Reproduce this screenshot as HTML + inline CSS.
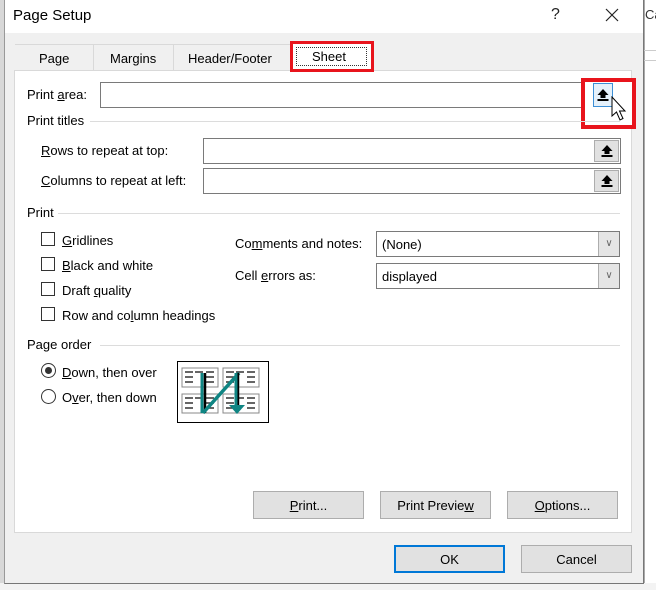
<!DOCTYPE html>
<html><head><style>
*{margin:0;padding:0;box-sizing:border-box}
body{width:656px;height:590px;overflow:hidden;background:#fff;font-family:"Liberation Sans",sans-serif;font-size:13px;color:#000;position:relative}
.a{position:absolute}
.t{position:absolute;white-space:nowrap;line-height:18px}
u{text-decoration:underline}
.inp{position:absolute;background:#fff;border:1px solid #7a7a7a}
.ub{position:absolute;width:24px;height:22px;background:#e1e1e1;border:1px solid #adadad;display:flex;align-items:center;justify-content:center}
.line{position:absolute;height:1px;background:#dcdcdc}
.cb{position:absolute;width:14px;height:14px;border:1px solid #333;background:#fff}
.btn{position:absolute;width:111px;height:28px;background:#e1e1e1;border:1px solid #adadad;text-align:center;line-height:27px}
.rad{position:absolute;width:15px;height:15px;border:1px solid #333;border-radius:50%;background:#fff}
.sel{position:absolute;background:#fff;border:1px solid #7a7a7a;height:26px;padding-left:5px;line-height:26px}
.sel .dd{position:absolute;right:0;top:0;width:21px;height:24px;background:#e5e5e5;border-left:1px solid #adadad;color:#666;font-size:10px;text-align:center;line-height:24px}
</style></head><body>
<div class="a" style="left:0;top:0;width:4px;height:590px;background:#d8d8d8"></div>
<div class="a" style="left:644px;top:0;width:12px;height:590px;background:#fff;border-left:1px solid #aaa"></div>
<div class="t" style="left:645px;top:6px;color:#333">Ca</div>
<div class="a" style="left:644px;top:50px;width:12px;height:1px;background:#ccc"></div>
<div class="a" style="left:644px;top:60px;width:12px;height:1px;background:#ccc"></div>
<div class="a" style="left:0;top:583px;width:656px;height:7px;background:#f3f3f3"></div>
<div class="a" style="left:4px;top:0;width:640px;height:584px;background:#f0f0f0;border-right:1px solid #777;border-bottom:1px solid #777;border-left:1px solid #999"></div>
<div class="a" style="left:5px;top:0;width:638px;height:33px;background:#fff"></div>
<div class="t" style="left:13px;top:7px;font-size:15px;line-height:18px">Page Setup</div>
<div class="t" style="left:551px;top:6px;font-size:16px;color:#222">?</div>
<svg class="a" style="left:605px;top:8px" width="14" height="14"><path d="M1 1L13 13M13 1L1 13" stroke="#222" stroke-width="1.2"/></svg>
<div class="a" style="left:15px;top:44px;width:275px;height:1px;background:#d9d9d9"></div>
<div class="a" style="left:93px;top:45px;width:1px;height:25px;background:#d9d9d9"></div>
<div class="a" style="left:173px;top:45px;width:1px;height:25px;background:#d9d9d9"></div>
<div class="t" style="left:39px;top:50px">Page</div>
<div class="t" style="left:110px;top:50px">Margins</div>
<div class="t" style="left:188px;top:50px">Header/Footer</div>
<div class="a" style="left:14px;top:70px;width:618px;height:463px;background:#fff;border:1px solid #d9d9d9"></div>
<div class="a" style="left:290px;top:41px;width:84px;height:31px;background:#fff;border:3px solid #e8141c"></div>
<div class="a" style="left:296px;top:47px;width:71px;height:19px;border:1px dotted #333"></div>
<div class="t" style="left:312px;top:48px">Sheet</div>
<div class="t" style="left:27px;top:86px">Print <u>a</u>rea:</div>
<div class="inp" style="left:100px;top:82px;width:522px;height:26px"></div>
<div class="a" style="left:581px;top:78px;width:55px;height:51px;border:4px solid #e8141c;background:#fff"></div>
<div class="ub" style="left:593px;top:83px;width:20px;height:24px;border-color:#3c8fd6;background:#e5f1fb">
<svg width="12" height="14"><path d="M6 1L11.5 7H8.5V10H3.5V7H0.5Z" fill="#000"/><rect x="0.5" y="11" width="11" height="2" fill="#000"/></svg></div>
<svg class="a" style="left:611px;top:96px" width="20" height="30"><path d="M1 1V20L5.5 16L9 24L12 22.5L8.5 15H14Z" fill="#fff" stroke="#000" stroke-width="1"/></svg>
<div class="t" style="left:27px;top:112px">Print titles</div>
<div class="line" style="left:90px;top:121px;width:530px"></div>
<div class="t" style="left:41px;top:142px"><u>R</u>ows to repeat at top:</div>
<div class="inp" style="left:203px;top:138px;width:418px;height:26px"></div>
<div class="ub" style="left:594px;top:140px;width:25px;height:22px"><svg width="12" height="14"><path d="M6 1L11.5 7H8.5V10H3.5V7H0.5Z" fill="#000"/><rect x="0.5" y="11" width="11" height="2" fill="#000"/></svg></div>
<div class="t" style="left:41px;top:172px"><u>C</u>olumns to repeat at left:</div>
<div class="inp" style="left:203px;top:168px;width:418px;height:26px"></div>
<div class="ub" style="left:594px;top:170px;width:25px;height:22px"><svg width="12" height="14"><path d="M6 1L11.5 7H8.5V10H3.5V7H0.5Z" fill="#000"/><rect x="0.5" y="11" width="11" height="2" fill="#000"/></svg></div>
<div class="t" style="left:27px;top:204px">Print</div>
<div class="line" style="left:58px;top:213px;width:562px"></div>
<div class="cb" style="left:41px;top:232px"></div><div class="t" style="left:62px;top:232px"><u>G</u>ridlines</div>
<div class="cb" style="left:41px;top:257px"></div><div class="t" style="left:62px;top:257px"><u>B</u>lack and white</div>
<div class="cb" style="left:41px;top:282px"></div><div class="t" style="left:62px;top:282px">Draft <u>q</u>uality</div>
<div class="cb" style="left:41px;top:307px"></div><div class="t" style="left:62px;top:307px">Row and co<u>l</u>umn headings</div>
<div class="t" style="left:235px;top:235px">Co<u>m</u>ments and notes:</div>
<div class="sel" style="left:376px;top:231px;width:244px">(None)<div class="dd">&#8744;</div></div>
<div class="t" style="left:235px;top:267px">Cell <u>e</u>rrors as:</div>
<div class="sel" style="left:376px;top:263px;width:244px">displayed<div class="dd">&#8744;</div></div>
<div class="t" style="left:27px;top:336px">Page order</div>
<div class="line" style="left:100px;top:345px;width:520px"></div>
<div class="rad" style="left:41px;top:363px"><div class="a" style="left:3px;top:3px;width:7px;height:7px;border-radius:50%;background:#333"></div></div>
<div class="t" style="left:62px;top:364px"><u>D</u>own, then over</div>
<div class="rad" style="left:41px;top:389px"></div>
<div class="t" style="left:62px;top:389px">O<u>v</u>er, then down</div>
<div class="a" style="left:177px;top:361px;width:92px;height:62px;border:1px solid #000;background:#fff"></div>
<svg class="a" style="left:181px;top:367px" width="84" height="50">
<g fill="#fff" stroke="#888" stroke-width="1">
<rect x="1" y="1" width="36" height="19"/><rect x="42" y="1" width="36" height="19"/>
<rect x="1" y="27" width="36" height="19"/><rect x="42" y="27" width="36" height="19"/></g>
<g stroke="#333" stroke-width="1.5">
<path d="M4 5h8M14 5h8M25 5h8M4 10h8M25 10h8M4 15h8M25 15h8M45 5h8M55 5h8M66 5h8M45 10h8M66 10h8M45 15h8M66 15h8"/>
<path d="M4 31h8M14 31h8M25 31h8M4 36h8M25 36h8M4 41h8M25 41h8M45 31h8M55 31h8M66 31h8M45 36h8M66 36h8M45 41h8M66 41h8"/></g>
<path d="M24 6V46" stroke="#000" stroke-width="2.5"/>
<path d="M21 6V46" stroke="#0f8583" stroke-width="3"/>
<path d="M22 46L58 6" stroke="#0f8583" stroke-width="3.5"/>
<path d="M57 6V40" stroke="#000" stroke-width="2.5"/>
<path d="M55 6V40" stroke="#0f8583" stroke-width="3"/>
<path d="M48 38L56 47L64 38Z" fill="#0f8583"/>
</svg>
<div class="btn" style="left:253px;top:491px"><u>P</u>rint...</div>
<div class="btn" style="left:380px;top:491px">Print Previe<u>w</u></div>
<div class="btn" style="left:507px;top:491px"><u>O</u>ptions...</div>
<div class="btn" style="left:394px;top:545px;border:2px solid #0078d7;line-height:25px">OK</div>
<div class="btn" style="left:521px;top:545px">Cancel</div>
</body></html>
